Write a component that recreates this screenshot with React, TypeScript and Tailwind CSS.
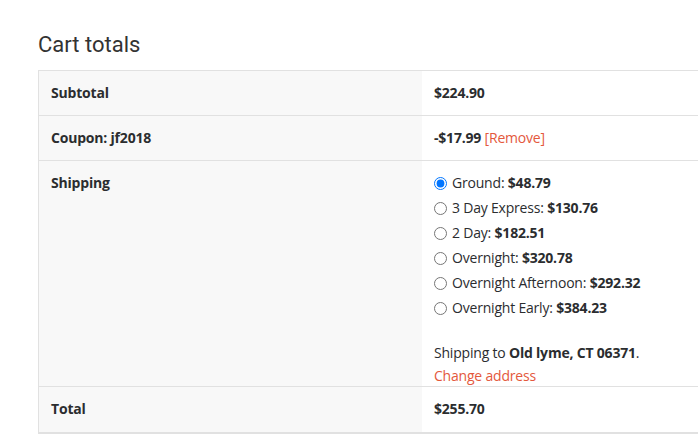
import React from "react";

const rates = [
  { label: "Ground", price: "$48.79", checked: true },
  { label: "3 Day Express", price: "$130.76" },
  { label: "2 Day", price: "$182.51" },
  { label: "Overnight", price: "$320.78" },
  { label: "Overnight Afternoon", price: "$292.32" },
  { label: "Overnight Early", price: "$384.23" },
];

export default function App() {
  return (
    <div
      className="w-[698px] h-[437px] overflow-hidden bg-white pl-[38px] pt-[30px] text-[#2b2d2f]"
      style={{ fontFamily: '"Open Sans", sans-serif' }}
    >
      <h2
        className="text-[22px] leading-[30px] font-normal text-[#333] mb-[10px]"
        style={{ fontFamily: 'Roboto, "Open Sans", sans-serif' }}
      >
        Cart totals
      </h2>
      <div className="w-[700px] border-l border-t border-[#e1e1e1] border-b-2 text-[14px] tracking-[-0.2px]">
        <div className="flex border-b border-[#e1e1e1] h-[45px]">
          <div className="w-[383px] bg-[#f8f8f8] px-[12px] pt-[12px] font-bold leading-[20px]">Subtotal</div>
          <div className="flex-1 px-[12px] pt-[12px] font-bold leading-[20px]">$224.90</div>
        </div>
        <div className="flex border-b border-[#e1e1e1] h-[45px]">
          <div className="w-[383px] bg-[#f8f8f8] px-[12px] pt-[12px] font-bold leading-[20px]">Coupon: jf2018</div>
          <div className="flex-1 px-[12px] pt-[12px] leading-[20px]">
            <span className="font-bold">-$17.99</span>{" "}
            <span className="text-[#e4583c]">[Remove]</span>
          </div>
        </div>
        <div className="flex border-b border-[#e1e1e1] h-[226px]">
          <div className="w-[383px] bg-[#f8f8f8] px-[12px] pt-[12px] font-bold leading-[20px]">Shipping</div>
          <div className="flex-1 px-[12px] pt-[12px] leading-[20px]">
            <ul className="flex flex-col gap-[5px]">
              {rates.map((r) => (
                <li key={r.label} className="flex items-center h-[20px]">
                  <input
                    type="radio"
                    name="ship"
                    defaultChecked={r.checked}
                    className="w-[13px] h-[13px] m-0 mr-[5px] accent-[#0075ff]"
                  />
                  <span>
                    {r.label}: <span className="font-bold">{r.price}</span>
                  </span>
                </li>
              ))}
            </ul>
            <p className="mt-[23px] leading-[23px]">
              Shipping to <span className="font-bold">Old lyme, CT 06371</span>.
            </p>
            <p className="leading-[23px] text-[#e4583c]">Change address</p>
          </div>
        </div>
        <div className="flex h-[45px]">
          <div className="w-[383px] bg-[#f8f8f8] px-[12px] pt-[12px] font-bold leading-[20px]">Total</div>
          <div className="flex-1 px-[12px] pt-[12px] font-bold leading-[20px]">$255.70</div>
        </div>
      </div>
    </div>
  );
}
